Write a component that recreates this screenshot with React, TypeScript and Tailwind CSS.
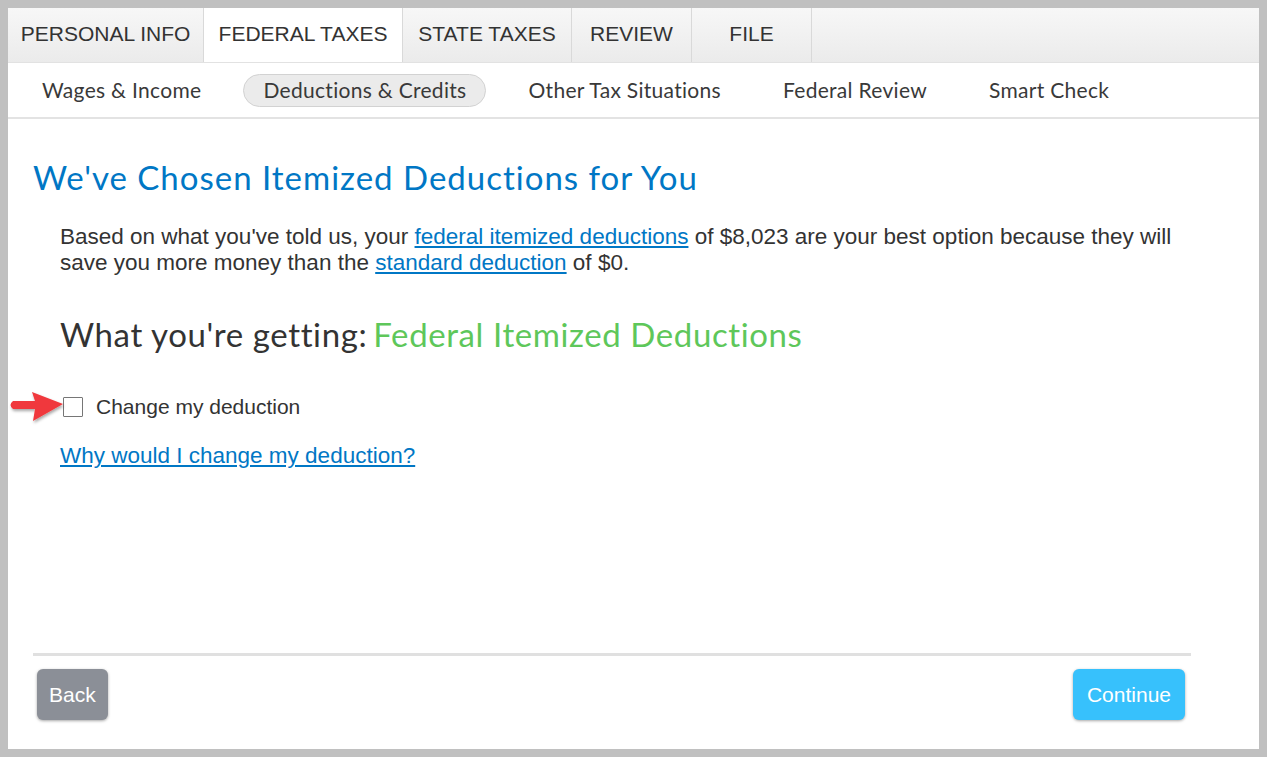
import React from "react";

const sans = { fontFamily: '"Liberation Sans", Arial, sans-serif' };

export default function App() {
  const tabs = [
    { label: "PERSONAL INFO", w: "w-[196px]", active: false },
    { label: "FEDERAL TAXES", w: "w-[199px]", active: true },
    { label: "STATE TAXES", w: "w-[169px]", active: false },
    { label: "REVIEW", w: "w-[120px]", active: false },
    { label: "FILE", w: "w-[120px]", active: false },
  ];
  const sub = ["Wages & Income", "Deductions & Credits", "Other Tax Situations", "Federal Review", "Smart Check"];
  return (
    <div className="w-[1267px] h-[757px] bg-[#c0c0c0] p-[8px] box-border">
      <div className="relative w-full h-full bg-white flex flex-col">
        {/* Top tabs */}
        <div className="flex h-[55px] bg-gradient-to-b from-[#f7f7f7] to-[#ebebeb] border-b border-[#e2e2e2] font-['Liberation_Sans',Arial,sans-serif] text-[21px] text-[#333]">
          {tabs.map((t) => (
            <div
              key={t.label}
              className={`${t.w} flex items-center justify-center pb-[2px] border-r border-[#d9d9d9] ${t.active ? "bg-white" : ""}`}
            >
              {t.label}
            </div>
          ))}
        </div>
        {/* Sub nav */}
        <div className="flex items-center h-[56px] pl-[14px] gap-[22px] border-b-2 border-[#e3e3e3] font-['Lato',sans-serif] text-[21px] tracking-[0.3px] text-[#393939]">
          {sub.map((s, i) => (
            <div
              key={s}
              className={`h-[33px] flex items-center rounded-full ${
                i === 1 ? "px-[19px] bg-[#ebebeb] border border-[#d2d2d2]" : "px-[20px]"
              }`}
            >
              {s}
            </div>
          ))}
        </div>
        {/* Content */}
        <div className="flex-1 flex flex-col pl-[25px] pr-[68px]">
          <h1 className="mt-[38px] font-['Lato',sans-serif] text-[33px] tracking-[1px] leading-[40px] text-[#0077c5]">
            We've Chosen Itemized Deductions for You
          </h1>
          <div className="pl-[27px]">
            <p className="mt-[27px] w-[1135px] text-[22.5px] leading-[26px] text-[#333]" style={sans}>
              Based on what you've told us, your{" "}
              <a className="text-[#0077c5] underline">federal itemized deductions</a> of $8,023 are your best option
              because they will save you more money than the{" "}
              <a className="text-[#0077c5] underline">standard deduction</a> of $0.
            </p>
            <div className="mt-[38px] font-['Lato',sans-serif] text-[33px] tracking-[0.6px] leading-[40px] text-[#333]">
              What you're getting:<span className="ml-[6px] text-[#5ec75a]">Federal Itemized Deductions</span>
            </div>
            <label className="mt-[41px] flex items-center gap-[13px] text-[21px] leading-[24px] text-[#333]" style={sans}>
              <span className="ml-[3px] w-[20px] h-[20px] border border-[#767676] bg-white rounded-[1px]" />
              Change my deduction
            </label>
            <a className="mt-[24px] inline-block text-[22.5px] leading-[26px] text-[#0077c5] underline" style={sans}>
              Why would I change my deduction?
            </a>
          </div>
          <div className="mt-auto h-[3px] bg-[#e0e0e0]" />
          <div className="flex justify-between items-center pl-[4px] pr-[6px] mt-[13px] mb-[29px]" style={sans}>
            <button className="h-[51px] px-[12px] rounded-[6px] bg-[#8b8f97] text-white text-[21px] shadow-[0_1px_3px_rgba(0,0,0,0.35)]">
              Back
            </button>
            <button className="h-[51px] px-[14px] rounded-[6px] bg-[#37c1fc] text-white text-[21px] shadow-[0_1px_3px_rgba(0,0,0,0.35)]">
              Continue
            </button>
          </div>
        </div>
        {/* Red arrow annotation */}
        <svg className="absolute left-[0px] top-[372px]" width="64" height="50" viewBox="0 0 64 50">
          <defs>
            <filter id="sh" x="-20%" y="-20%" width="140%" height="160%">
              <feDropShadow dx="1" dy="2" stdDeviation="1.5" floodColor="#000" floodOpacity="0.35" />
            </filter>
          </defs>
          <path d="M5 21 Q0 25 5 29 L27 29 L25 41 L55 24 L24 12 L27 21 Z" fill="#f0393c" filter="url(#sh)" />
        </svg>
      </div>
    </div>
  );
}
